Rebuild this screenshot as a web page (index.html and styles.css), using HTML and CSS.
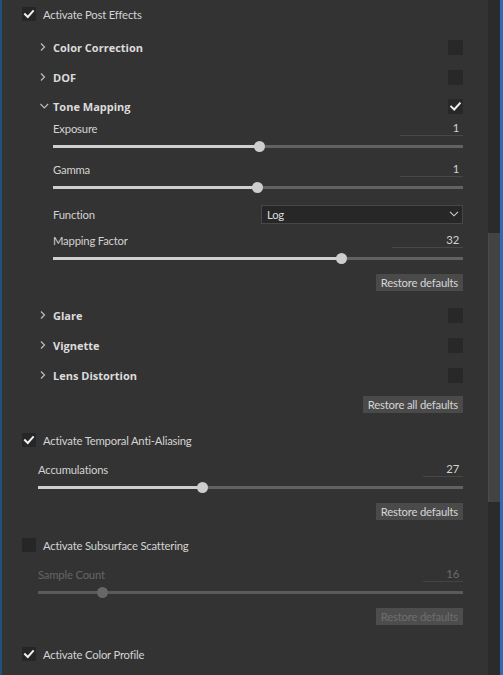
FILE: index.html
```html
<!DOCTYPE html>
<html>
<head>
<meta charset="utf-8">
<link rel="stylesheet" href="styles.css">
</head>
<body>
<div class="window">
  <div class="edge-left"></div>
  <div class="content">
    <div class="toggle first">
      <span class="cb"><svg viewBox="0 0 14 14" width="14" height="14"><path d="M3 7.2 L5.8 10 L11 4.2" /></svg></span>
      <span>Activate Post Effects</span>
    </div>

    <div class="sections">
      <div class="section-row">
        <svg class="chev" viewBox="0 0 13 10" width="13" height="10"><path d="M1 1.5 L4.5 5 L1 8.5"/></svg>
        <span class="sec-title">Color Correction</span>
        <span class="cb sm"></span>
      </div>
      <div class="section-row">
        <svg class="chev" viewBox="0 0 13 10" width="13" height="10"><path d="M1 1.5 L4.5 5 L1 8.5"/></svg>
        <span class="sec-title">DOF</span>
        <span class="cb sm"></span>
      </div>
      <div class="section-row open">
        <svg class="chev" viewBox="0 0 13 10" width="13" height="10"><path d="M0.5 3 L4.3 6.8 L8.1 3"/></svg>
        <span class="sec-title">Tone Mapping</span>
        <span class="cb sm"><svg viewBox="0 0 15 15" width="15" height="15"><path d="M3.2 7.6 L6.2 10.5 L11.8 4.4" /></svg></span>
      </div>

      <div class="params tm">
        <div class="param-head">
          <span>Exposure</span>
          <span class="val w63">1</span>
        </div>
        <div class="slider">
          <div class="fill" style="width:50.2%"></div><div class="thumb"></div><div class="rest"></div>
        </div>

        <div class="param-head gap5">
          <span>Gamma</span>
          <span class="val w63">1</span>
        </div>
        <div class="slider">
          <div class="fill" style="width:49.7%"></div><div class="thumb"></div><div class="rest"></div>
        </div>

        <div class="func-row">
          <span class="func-label">Function</span>
          <div class="select">
            <span>Log</span>
            <svg viewBox="0 0 10 6" width="10" height="6"><path d="M1 0.8 L5 4.8 L9 0.8"/></svg>
          </div>
        </div>

        <div class="param-head gap8">
          <span>Mapping Factor</span>
          <span class="val w71">32</span>
        </div>
        <div class="slider">
          <div class="fill" style="width:70.2%"></div><div class="thumb"></div><div class="rest"></div>
        </div>

        <div class="btn-row"><span class="btn">Restore defaults</span></div>
      </div>

      <div class="section-row glare">
        <svg class="chev" viewBox="0 0 13 10" width="13" height="10"><path d="M1 1.5 L4.5 5 L1 8.5"/></svg>
        <span class="sec-title">Glare</span>
        <span class="cb sm"></span>
      </div>
      <div class="section-row">
        <svg class="chev" viewBox="0 0 13 10" width="13" height="10"><path d="M1 1.5 L4.5 5 L1 8.5"/></svg>
        <span class="sec-title">Vignette</span>
        <span class="cb sm"></span>
      </div>
      <div class="section-row">
        <svg class="chev" viewBox="0 0 13 10" width="13" height="10"><path d="M1 1.5 L4.5 5 L1 8.5"/></svg>
        <span class="sec-title">Lens Distortion</span>
        <span class="cb sm"></span>
      </div>
      <div class="btn-row"><span class="btn">Restore all defaults</span></div>
    </div>

    <div class="toggle taa">
      <span class="cb"><svg viewBox="0 0 14 14" width="14" height="14"><path d="M3 7.2 L5.8 10 L11 4.2" /></svg></span>
      <span>Activate Temporal Anti-Aliasing</span>
    </div>
    <div class="params sub">
      <div class="param-head">
        <span>Accumulations</span>
        <span class="val w40">27</span>
      </div>
      <div class="slider">
        <div class="fill" style="width:38.6%"></div><div class="thumb"></div><div class="rest"></div>
      </div>
      <div class="btn-row"><span class="btn">Restore defaults</span></div>
    </div>

    <div class="toggle sss">
      <span class="cb"></span>
      <span>Activate Subsurface Scattering</span>
    </div>
    <div class="params sub disabled">
      <div class="param-head">
        <span>Sample Count</span>
        <span class="val w40">16</span>
      </div>
      <div class="slider">
        <div class="fill" style="width:15%"></div><div class="thumb"></div><div class="rest"></div>
      </div>
      <div class="btn-row"><span class="btn">Restore defaults</span></div>
    </div>

    <div class="toggle cp">
      <span class="cb"><svg viewBox="0 0 14 14" width="14" height="14"><path d="M3 7.2 L5.8 10 L11 4.2" /></svg></span>
      <span>Activate Color Profile</span>
    </div>
  </div>
  <div class="scrollbar">
    <div class="scroll-space"></div>
    <div class="scroll-thumb"></div>
  </div>
  <div class="edge-right"></div>
</div>
</body>
</html>
```

FILE: styles.css
```css
html, body {
  margin: 0;
  padding: 0;
  background: #333333;
}

body {
  font-family: Lato, "Open Sans", sans-serif;
  font-size: 11.3px;
  letter-spacing: -0.2px;
  color: #d2d2d2;
}

.window {
  display: flex;
  height: 675px;
  overflow: hidden;
}

.edge-left {
  width: 2px;
  background: #234f7c;
}

.content {
  flex: 1;
  padding-right: 25px;
}

.scrollbar {
  width: 12px;
  display: flex;
  flex-direction: column;
  background: #2b2b2b;
}

.scroll-space {
  height: 233px;
}

.scroll-thumb {
  height: 269px;
  background: #434343;
  border-left: 1px solid #4b4b4b;
}

.edge-right {
  width: 3px;
  background: #2d6ab3;
}

/* checkboxes */
.cb {
  width: 14px;
  height: 14px;
  background: #262626;
  display: flex;
  align-items: center;
  justify-content: center;
  flex: none;
}

.cb.sm {
  width: 15px;
  height: 15px;
  background: #282828;
}

.cb svg path {
  fill: none;
  stroke: #f0f0f0;
  stroke-width: 2;
  stroke-linecap: square;
}

/* main toggles */
.toggle {
  display: flex;
  align-items: center;
  height: 22px;
  padding-left: 20px;
  gap: 7px;
  color: #d4d4d4;
}

.toggle.first { margin-top: 3px; }
.toggle.taa { margin-top: 16px; }
.toggle.sss { margin-top: 14px; }
.toggle.cp { margin-top: 18px; }

/* sections */
.sections {
  margin-top: 7px;
}

.section-row {
  display: flex;
  align-items: center;
  height: 30px;
  padding-left: 38px;
}

.section-row.open {
  height: 28px;
}

.section-row.glare {
  margin-top: 9px;
}

.chev {
  flex: none;
}

.chev path {
  fill: none;
  stroke: #bdbdbd;
  stroke-width: 1.2;
}

.sec-title {
  flex: 1;
  font-family: "Open Sans", Lato, sans-serif;
  font-size: 11px;
  letter-spacing: 0;
  font-weight: bold;
  color: #dcdcdc;
}

/* params */
.params.tm {
  padding-left: 51px;
}

.params.sub {
  padding-left: 36px;
  margin-top: 10px;
}

.param-head {
  display: flex;
  justify-content: space-between;
  align-items: center;
  height: 16px;
}

.param-head.gap5 { margin-top: 5px; }
.param-head.gap8 { margin-top: 8px; }

.val {
  box-sizing: border-box;
  height: 16px;
  text-align: right;
  padding-right: 4px;
  border-bottom: 1px solid #474747;
  line-height: 16px;
}

.w63 { width: 63px; }
.w71 { width: 71px; }
.w40 { width: 40px; }

.slider {
  display: flex;
  align-items: center;
  height: 20px;
}

.fill {
  height: 3px;
  background: #cfcfcf;
  flex: none;
}

.thumb {
  width: 11px;
  height: 11px;
  border-radius: 50%;
  background: #cdcdcd;
  margin: 0 -5px;
  position: relative;
  z-index: 1;
  flex: none;
}

.rest {
  flex: 1;
  height: 3px;
  background: #626262;
}

.func-row {
  display: flex;
  align-items: center;
  height: 20px;
  margin-top: 7px;
}

.func-label {
  flex: 1;
}

.select {
  box-sizing: border-box;
  width: 202px;
  height: 19px;
  background: #272727;
  border: 1px solid #474747;
  display: flex;
  align-items: center;
  justify-content: space-between;
  padding: 0 3px 0 5px;
  color: #dcdcdc;
}

.select svg path {
  fill: none;
  stroke: #cfcfcf;
  stroke-width: 1.1;
}

.btn-row {
  display: flex;
  justify-content: flex-end;
  margin-top: 6px;
}

.btn {
  height: 17px;
  line-height: 17px;
  padding: 0 5px;
  background: #4a4a4a;
  color: #d6d6d6;
}

/* disabled */
.disabled {
  color: #656565;
}

.disabled .val {
  color: #6a6a6a;
  border-bottom-color: #444;
}

.disabled .fill,
.disabled .rest {
  background: #5a5a5a;
}

.disabled .thumb {
  background: #676767;
}

.disabled .btn {
  background: #4d4d4d;
  color: #6e6e6e;
}
```
